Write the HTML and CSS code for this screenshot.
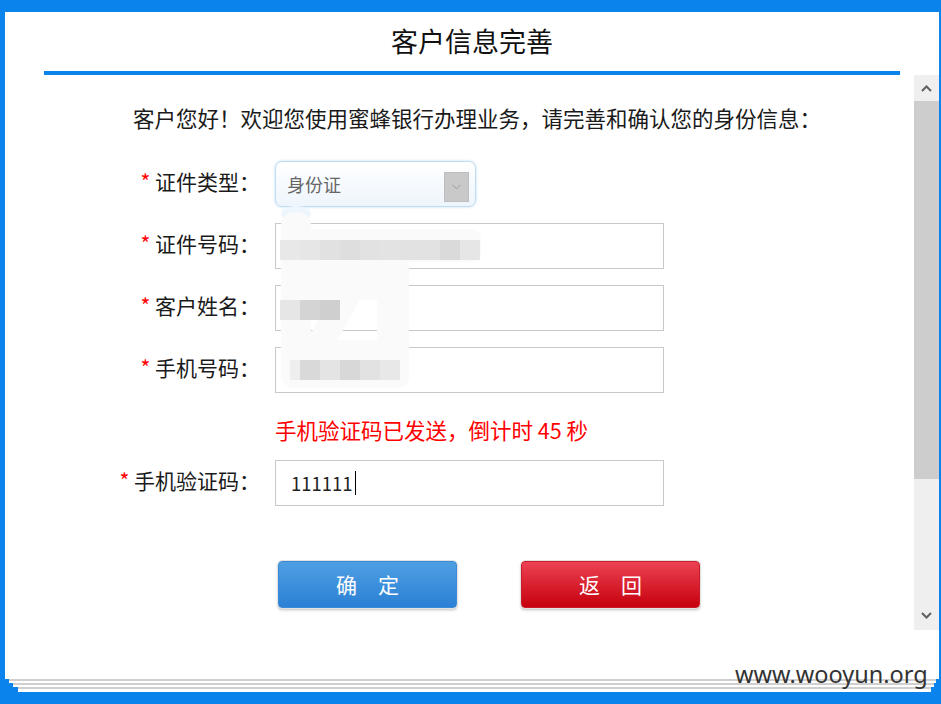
FILE: index.html
```html
<!DOCTYPE html>
<html lang="zh-CN">
<head>
  <meta charset="UTF-8" />
  <meta name="viewport" content="width=device-width, initial-scale=1.0" />
  <title>客户信息完善</title>
  <link rel="stylesheet" href="styles.css">
</head>
<body>
  <div class="window">
    <h1 class="title">客户信息完善</h1>
    <div class="title-line"></div>
    <div class="main">
      <div class="content">
        <p class="intro">客户您好！欢迎您使用蜜蜂银行办理业务，请完善和确认您的身份信息：</p>
        <div class="form">
          <div class="row">
            <label class="label"><span class="req">*</span> 证件类型：</label>
            <div class="select">
              <span class="select-text">身份证</span>
              <span class="select-arrow">
                <svg width="9" height="6" viewBox="0 0 9 6"><polyline points="0.5,0.8 4.5,4.8 8.5,0.8" fill="none" stroke="#9a9a9a" stroke-width="1"/></svg>
              </span>
            </div>
          </div>
          <div class="row">
            <label class="label"><span class="req">*</span> 证件号码：</label>
            <div class="field"></div>
          </div>
          <div class="row">
            <label class="label"><span class="req">*</span> 客户姓名：</label>
            <div class="field"></div>
          </div>
          <div class="row">
            <label class="label"><span class="req">*</span> 手机号码：</label>
            <div class="field"></div>
          </div>
          <div class="row msg-row">
            <p class="msg">手机验证码已发送，倒计时 45 秒</p>
          </div>
          <div class="row">
            <label class="label"><span class="req">*</span> 手机验证码：</label>
            <div class="field">111111<span class="caret"></span></div>
          </div>
        </div>
        <div class="buttons">
          <button class="btn btn-ok">确　定</button>
          <button class="btn btn-back">返　回</button>
        </div>
      </div>
      <div class="scrollbar">
        <div class="sb-btn">
          <svg width="11" height="7" viewBox="0 0 11 7"><polyline points="1,6 5.5,1.5 10,6" fill="none" stroke="#606060" stroke-width="2"/></svg>
        </div>
        <div class="sb-thumb"></div>
        <div class="sb-track"></div>
        <div class="sb-btn sb-down">
          <svg width="11" height="7" viewBox="0 0 11 7"><polyline points="1,1 5.5,5.5 10,1" fill="none" stroke="#606060" stroke-width="2"/></svg>
        </div>
      </div>
    </div>

    <!-- blurred / masked personal data -->
    <svg class="mask" width="934" height="667" viewBox="5 12 934 667">
      <ellipse cx="296" cy="214" rx="15" ry="8" fill="#eef6fd"/>
      <g fill="#fafafa">
        <rect x="281" y="212" width="30" height="176" rx="14"/>
        <rect x="281" y="229" width="200" height="33" rx="10"/>
        <rect x="281" y="262" width="128" height="38"/>
        <rect x="377" y="258" width="32" height="130" rx="12"/>
        <polygon points="345,268 377,268 335,345 305,345"/>
        <rect x="290" y="340" width="119" height="48" rx="12"/>
      </g>
      <g>
        <rect x="280" y="240" width="20" height="20" fill="#e8e8e8"/>
        <rect x="300" y="240" width="20" height="20" fill="#e6e6e6"/>
        <rect x="320" y="240" width="20" height="20" fill="#e1e1e1"/>
        <rect x="340" y="240" width="20" height="20" fill="#dedede"/>
        <rect x="360" y="240" width="20" height="20" fill="#e2e2e2"/>
        <rect x="380" y="240" width="20" height="20" fill="#e3e3e3"/>
        <rect x="400" y="240" width="20" height="20" fill="#e2e2e2"/>
        <rect x="420" y="240" width="20" height="20" fill="#e2e2e2"/>
        <rect x="440" y="240" width="20" height="20" fill="#dadada"/>
        <rect x="460" y="240" width="20" height="20" fill="#e6e6e6"/>
        <rect x="280" y="300" width="20" height="20" fill="#e6e6e6"/>
        <rect x="300" y="300" width="20" height="20" fill="#d4d4d4"/>
        <rect x="320" y="300" width="20" height="20" fill="#cfcfcf"/>
        <rect x="290" y="360" width="10" height="20" fill="#eeeeee"/>
        <rect x="300" y="360" width="20" height="20" fill="#d9d9d9"/>
        <rect x="320" y="360" width="20" height="20" fill="#e4e4e4"/>
        <rect x="340" y="360" width="20" height="20" fill="#d8d8d8"/>
        <rect x="360" y="360" width="20" height="20" fill="#e2e2e2"/>
        <rect x="380" y="360" width="20" height="20" fill="#e8e8e8"/>
      </g>
    </svg>
  </div>
  <div class="sheet sheet-1"></div>
  <div class="sheet sheet-2"></div>
  <div class="sheet sheet-3"></div>

  <div class="watermark">www.wooyun.org</div>
</body>
</html>
```

FILE: styles.css
```css
* {
  margin: 0;
  padding: 0;
  box-sizing: border-box;
}
body {
  position: relative;
  height: 704px;
  overflow: hidden;
  background: #0a84ec;
  font-family: "Noto Sans CJK SC", "Noto Sans", sans-serif;
  color: #1a1a1a;
}
.window {
  position: relative;
  margin: 12px 0 0 5px;
  width: 934px;
  height: 667px;
  background: #fff;
}
.title {
  font-size: 27px;
  font-weight: normal;
  line-height: 30px;
  text-align: center;
  padding: 14px 0 15px;
  color: #111;
}
.title-line {
  height: 4px;
  margin: 0 39px;
  background: #0a84ec;
}
.main {
  display: flex;
  height: 555px;
}
.content {
  flex: 1;
}
.intro {
  font-size: 21.5px;
  line-height: 30px;
  padding: 28px 0 0 128px;
}
.form {
  margin-top: 28px;
}
.row {
  display: flex;
  align-items: center;
  height: 46px;
  margin-bottom: 16px;
}
.label {
  width: 255px;
  margin: 0 15px 6px 0;
  text-align: right;
  font-size: 21px;
  line-height: 40px;
}
.req {
  color: #f00;
}
.select {
  display: flex;
  align-items: center;
  justify-content: space-between;
  width: 201px;
  height: 46px;
  padding: 0 6px 0 11px;
  border: 1px solid #bfdcf1;
  border-radius: 7px;
  background: linear-gradient(#ffffff, #eef5fc);
  box-shadow: 0 0 3px rgba(110, 175, 230, 0.45);
}
.select-text {
  font-size: 18px;
  color: #666;
}
.select-arrow {
  display: flex;
  align-items: center;
  justify-content: center;
  width: 25px;
  height: 30px;
  margin-top: 6px;
  background: #c9c9c9;
  border: 1px solid #bdbdbd;
}
.field {
  display: flex;
  align-items: center;
  width: 389px;
  height: 46px;
  padding-left: 15px;
  border: 1px solid #c8c8c8;
  font-size: 18.5px;
  color: #222;
}
.caret {
  display: inline-block;
  width: 1px;
  height: 24px;
  margin-left: 2px;
  background: #000;
}
.msg-row {
  margin-bottom: 5px;
}
.msg {
  margin: 0 0 4px 270px;
  font-size: 21.5px;
  line-height: 42px;
  color: #f00;
}
.buttons {
  display: flex;
  gap: 64px;
  margin-top: 55px;
  padding-left: 273px;
}
.btn {
  width: 179px;
  height: 47px;
  border: 1px solid;
  border-radius: 4px;
  color: #fff;
  font-family: inherit;
  font-size: 21px;
  line-height: 45px;
  cursor: pointer;
  box-shadow: 0 0 0 1px #e2e2e2, 0 2px 3px rgba(0, 0, 0, 0.25);
}
.btn-ok {
  background: linear-gradient(#4f9fe2, #2a80d5);
  border-color: #3a8ad8;
}
.btn-back {
  background: linear-gradient(#ec4252, #c6000e);
  border-color: #c81c2a;
}
.scrollbar {
  display: flex;
  flex-direction: column;
  width: 25px;
  background: #efefef;
}
.sb-btn {
  display: flex;
  align-items: center;
  justify-content: center;
  height: 26px;
}
.sb-down {
  height: 30px;
}
.sb-thumb {
  height: 378px;
  background: #cdcdcd;
}
.sb-track {
  flex: 1;
}
.mask {
  position: absolute;
  left: 0;
  top: 0;
  pointer-events: none;
}
.sheet {
  height: 4px;
  background: #fff;
  border-top: 2px solid #cfcfcf;
}
.sheet-1 {
  margin-left: 9px;
  width: 927px;
}
.sheet-2 {
  margin-left: 13px;
  width: 921px;
}
.sheet-3 {
  margin-left: 18px;
  width: 913px;
  height: 5px;
}
.watermark {
  position: absolute;
  left: 735px;
  top: 663px;
  font-family: "Noto Sans", sans-serif;
  font-size: 23.5px;
  line-height: 23.5px;
  color: #333;
}
```
